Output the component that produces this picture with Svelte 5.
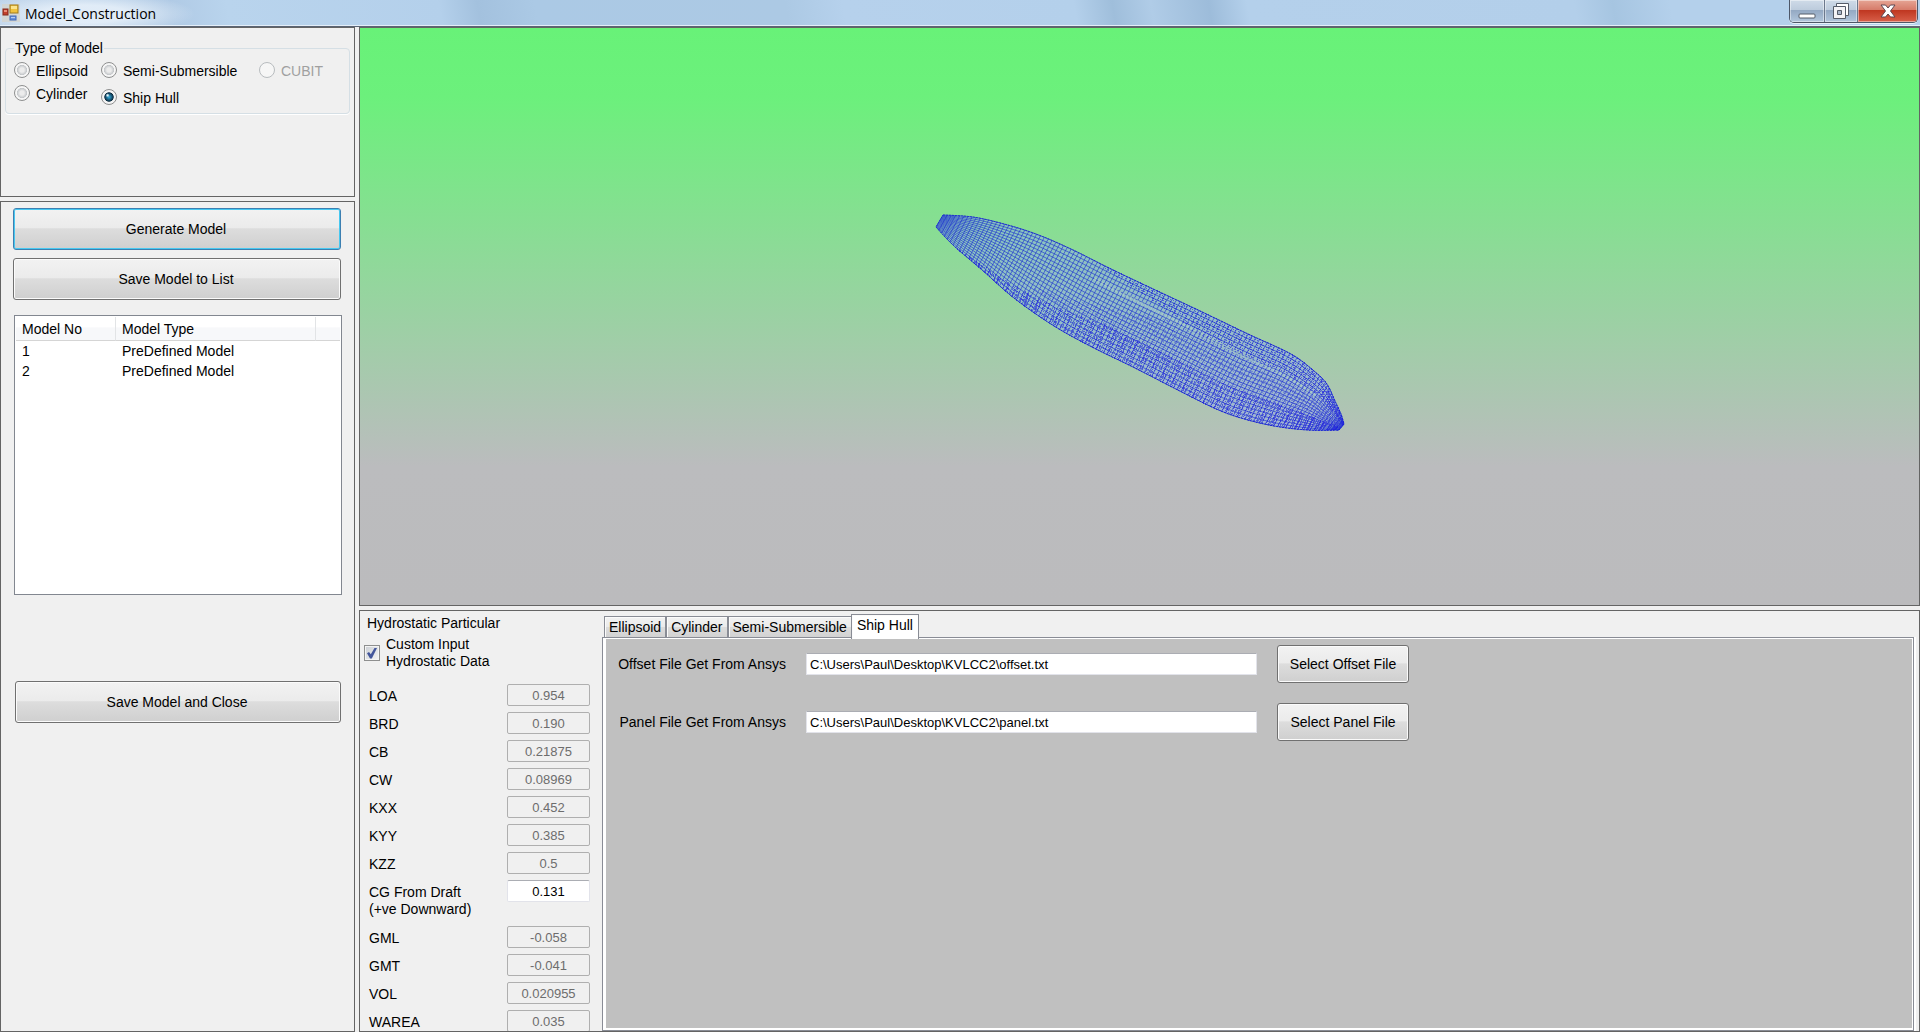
<script lang="ts">
	type Point = [number, number];

	let modelType = $state('ship');
	let activeTab = $state('Ship Hull');
	let customInput = $state(true);
	let offsetFile = $state('C:\\Users\\Paul\\Desktop\\KVLCC2\\offset.txt');
	let panelFile = $state('C:\\Users\\Paul\\Desktop\\KVLCC2\\panel.txt');

	const typeColumns = [
		[
			{ id: 'ellipsoid', label: 'Ellipsoid' },
			{ id: 'cylinder', label: 'Cylinder' }
		],
		[
			{ id: 'semi', label: 'Semi-Submersible' },
			{ id: 'ship', label: 'Ship Hull' }
		],
		[{ id: 'cubit', label: 'CUBIT', disabled: true }]
	];

	const models = [
		{ no: 1, type: 'PreDefined Model' },
		{ no: 2, type: 'PreDefined Model' }
	];

	const particulars = [
		{ name: 'LOA', value: '0.954' },
		{ name: 'BRD', value: '0.190' },
		{ name: 'CB', value: '0.21875' },
		{ name: 'CW', value: '0.08969' },
		{ name: 'KXX', value: '0.452' },
		{ name: 'KYY', value: '0.385' },
		{ name: 'KZZ', value: '0.5' },
		{ name: 'CG From Draft', note: '(+ve Downward)', value: '0.131', editable: true },
		{ name: 'GML', value: '-0.058' },
		{ name: 'GMT', value: '-0.041' },
		{ name: 'VOL', value: '0.020955' },
		{ name: 'WAREA', value: '0.035' }
	];

	const tabs = ['Ellipsoid', 'Cylinder', 'Semi-Submersible', 'Ship Hull'];

	// hull silhouette, bow to stern
	const deck = smooth([
		[9, 2], [39, 4], [70, 11], [102, 21], [137, 36], [177, 56], [217, 75], [264, 97],
		[314, 121], [357, 141], [380, 158], [393, 171], [400, 186], [407, 201], [410, 211]
	]);
	const keel = smooth([
		[2, 14], [20, 33], [47, 56], [80, 85], [120, 113], [160, 135], [197, 153], [240, 175],
		[280, 195], [307, 205], [340, 213], [374, 217], [405, 217]
	]);

	// Catmull-Rom through the control points
	function smooth(line: Point[]): Point[] {
		const out: Point[] = [];
		for (let i = 0; i < line.length - 1; i++) {
			const p0 = line[Math.max(i - 1, 0)];
			const p1 = line[i];
			const p2 = line[i + 1];
			const p3 = line[Math.min(i + 2, line.length - 1)];
			for (let k = 0; k < 6; k++) {
				const t = k / 6;
				const at = (n: 0 | 1) =>
					0.5 *
					(2 * p1[n] +
						(p2[n] - p0[n]) * t +
						(2 * p0[n] - 5 * p1[n] + 4 * p2[n] - p3[n]) * t * t +
						(3 * p1[n] - p0[n] - 3 * p2[n] + p3[n]) * t * t * t);
				out.push([at(0), at(1)]);
			}
		}
		out.push(line[line.length - 1]);
		return out;
	}

	function along(line: Point[], t: number): Point {
		const lengths = line.slice(1).map((p, i) => Math.hypot(p[0] - line[i][0], p[1] - line[i][1]));
		let rest = t * lengths.reduce((a, b) => a + b, 0);
		for (let i = 0; i < lengths.length; i++) {
			if (rest <= lengths[i] || i === lengths.length - 1) {
				const k = rest / lengths[i];
				return [
					line[i][0] + (line[i + 1][0] - line[i][0]) * k,
					line[i][1] + (line[i + 1][1] - line[i][1]) * k
				];
			}
			rest -= lengths[i];
		}
		return line[0];
	}

	function hullPoint(u: number, s: number): Point {
		const a = along(deck, u);
		const b = along(keel, u);
		return [a[0] + (b[0] - a[0]) * s, a[1] + (b[1] - a[1]) * s];
	}

	const fmt = (p: Point) => p[0].toFixed(1) + ' ' + p[1].toFixed(1);

	function waterline(u0: number, u1: number, s0: number, s1 = s0) {
		let d = '';
		for (let i = 0; i <= 50; i++) {
			d += (i ? 'L' : 'M') + fmt(hullPoint(u0 + ((u1 - u0) * i) / 50, s0 + ((s1 - s0) * i) / 50));
		}
		return d;
	}

	function stations(count: number) {
		let d = '';
		for (let i = 0; i <= count; i++) {
			d += `M${fmt(hullPoint(i / count, 0))}L${fmt(hullPoint(i / count, 1))}`;
		}
		return d;
	}

	// the starting station runs from first (at s0) to last (at s1)
	function waterlines(count: number, first: number, last: number, s0: number, s1: number) {
		let d = '';
		for (let j = 0; j <= count; j++) {
			const k = j / count;
			d += waterline(first + (last - first) * k, 1, s0 + (s1 - s0) * k);
		}
		return d;
	}

	const outline = 'M' + [...deck, ...[...keel].reverse()].map(fmt).join('L') + 'Z';
	const grid = stations(112) + waterlines(19, 0, 0, 0, 1);
	const bilge = waterlines(15, 0.42, 0.04, 0.68, 1);
	const side = waterlines(9, 0.34, 0.6, 0, 0.24);
	const bottom = waterlines(16, 0.55, 0.25, 0.26, 0.72);
	const knuckle = waterline(0.36, 0.9, 0.21, 0.3);
</script>

<div class="window">
	<header class="titlebar">
		<svg class="app-icon" width="18" height="18" viewBox="0 0 18 18" aria-hidden="true">
			<rect width="18" height="18" fill="#d5d3c9" opacity="0.7" />
			<rect x="8" y="1" width="8" height="8" fill="#f0c23c" stroke="#a07a1c" />
			<path d="M9 2h6v3H9z" fill="#fbe48c" />
			<rect x="1" y="5" width="5" height="6" fill="#c2402c" stroke="#84281c" />
			<path d="M2 6h3v2H2z" fill="#e88c78" />
			<rect x="8" y="12" width="6" height="4" fill="#6a92dc" stroke="#416ab8" />
			<path d="M9 13h4v1H9z" fill="#b4ccf4" />
		</svg>
		<h1>Model_Construction</h1>
		<div class="window-buttons">
			<button class="minimize" aria-label="Minimize">
				<svg width="18" height="6" viewBox="0 0 18 6">
					<rect x="1" y="1" width="16" height="4" rx="1" fill="#fff" stroke="#555c68" />
				</svg>
			</button>
			<button class="restore" aria-label="Restore">
				<svg width="20" height="18" viewBox="0 0 20 18">
					<path d="M5.500 1.500h12v12h-12z" fill="#fff" stroke="#555c68" />
					<path d="M2.500 4.500h12v12h-12z" fill="#f4f4f6" stroke="#555c68" />
					<path d="M6.500 8.500h4v4h-4z" fill="#a9b6c8" stroke="#555c68" />
				</svg>
			</button>
			<button class="close" aria-label="Close">
				<svg width="16" height="14" viewBox="0 0 16 14">
					<path
						d="M1 1h4.500L8 4l2.500-3H15l-4.500 6 4.500 6h-4.500L8 10l-2.500 3H1l4.500-6z"
						fill="#fff"
						stroke="#5d4650"
						stroke-linejoin="round"
					/>
				</svg>
			</button>
		</div>
	</header>

	<main>
		<div class="sidebar">
			<section class="panel">
				<fieldset>
					<legend>Type of Model</legend>
					<div class="types">
						{#each typeColumns as column}
							<div class="type-column">
								{#each column as item}
									<label class:disabled={item.disabled}>
										<input
											type="radio"
											name="type"
											value={item.id}
											bind:group={modelType}
											disabled={item.disabled}
										/>
										<span>{item.label}</span>
									</label>
								{/each}
							</div>
						{/each}
					</div>
				</fieldset>
			</section>

			<section class="panel actions">
				<button class="btn wide focused">Generate Model</button>
				<button class="btn wide">Save Model to List</button>
				<div class="list">
					<table>
						<thead>
							<tr><th class="no">Model No</th><th class="kind">Model Type</th><td></td></tr>
						</thead>
						<tbody>
							{#each models as model}
								<tr><td>{model.no}</td><td>{model.type}</td><td></td></tr>
							{/each}
						</tbody>
					</table>
				</div>
				<button class="btn wide save-close">Save Model and Close</button>
			</section>
		</div>

		<div class="content">
			<section class="panel viewport">
				<svg width="412" height="220" viewBox="0 0 412 220" role="img" aria-label="Hull mesh">
					<path d={outline} class="skin" />
					<path d={grid} class="wire" />
					<path d={bottom} class="wire dense faint" />
					<path d={bilge} class="wire dense" />
					<path d={side} class="wire dense" />
					<path d={knuckle} class="knuckle" />
				</svg>
			</section>

			<section class="panel details">
				<div class="hydro">
					<h2>Hydrostatic Particular</h2>
					<label class="custom">
						<input type="checkbox" bind:checked={customInput} />
						<span>Custom Input<br />Hydrostatic Data</span>
					</label>
					<div class="particulars">
						{#each particulars as item, i}
							<div class="particular" class:tall={item.note}>
								<label for="particular-{i}">
									{item.name}
									{#if item.note}<br />{item.note}{/if}
								</label>
								<input id="particular-{i}" type="text" value={item.value} disabled={!item.editable} />
							</div>
						{/each}
					</div>
				</div>

				<div class="tabs">
					<div class="tab-strip" role="tablist">
						{#each tabs as tab}
							<button
								role="tab"
								class="tab"
								class:active={activeTab === tab}
								aria-selected={activeTab === tab}
								onclick={() => (activeTab = tab)}
							>
								{tab}
							</button>
						{/each}
					</div>
					<div class="tab-page" role="tabpanel">
						{#if activeTab === 'Ship Hull'}
							<div class="files">
								<label for="offset-file">Offset File Get From Ansys</label>
								<input id="offset-file" type="text" bind:value={offsetFile} />
								<button class="btn">Select Offset File</button>
								<label for="panel-file">Panel File Get From Ansys</label>
								<input id="panel-file" type="text" bind:value={panelFile} />
								<button class="btn">Select Panel File</button>
							</div>
						{/if}
					</div>
				</div>
			</section>
		</div>
	</main>
</div>

<style>
	:global(body) {
		margin: 0;
		background: #f0f0f0;
	}

	.window {
		height: 100vh;
		display: flex;
		flex-direction: column;
		overflow: hidden;
		font: 14px/17px 'Liberation Sans', Arial, sans-serif;
		color: #000;
	}

	.window * {
		box-sizing: border-box;
	}

	button,
	input {
		font: inherit;
		color: inherit;
		margin: 0;
	}

	/* title bar */

	.titlebar {
		height: 27px;
		flex: none;
		display: flex;
		align-items: center;
		gap: 5px;
		padding: 0 2px;
		border-bottom: 1px solid #5a6474;
		box-shadow: inset 0 -1px #e4eef8;
		background:
			radial-gradient(ellipse 110px 22px at 85px 14px, rgba(235, 243, 251, 0.8) 40%, transparent),
			linear-gradient(
				80deg,
				#bdd3ea 0%,
				#b0cae5 9%,
				#b9d4ed 12%,
				#b4d0eb 23%,
				#a3c1de 25%,
				#abc9e5 28%,
				#acc9e4 41%,
				#b6d1ec 44%,
				#b4d0eb 56%,
				#9fbedb 58%,
				#b0cce7 60%,
				#9dbcda 63%,
				#b4d0eb 65%,
				#b3cfea 82%,
				#a6c5e1 84%,
				#b4d0eb 87%,
				#b4d0eb 100%
			);
	}

	.app-icon {
		flex: none;
	}

	h1 {
		margin: 0;
		padding-top: 2px;
		flex: 1;
		font: 14px/20px 'Open Sans', 'Noto Sans', sans-serif;
	}

	.window-buttons {
		align-self: flex-start;
		display: flex;
		height: 23px;
		border: 1px solid #4d5768;
		border-top: 0;
		border-radius: 0 0 5px 5px;
		overflow: hidden;
		box-shadow: 0 1px rgba(255, 255, 255, 0.7);
	}

	.window-buttons button {
		display: flex;
		align-items: center;
		justify-content: center;
		border: 0;
		padding: 0;
		box-shadow: inset 0 0 0 1px rgba(255, 255, 255, 0.45);
		background: linear-gradient(#cfdbe8 0, #bccbdc 45%, #93a8c2 46%, #b2c6dc 100%);
	}

	.window-buttons .minimize {
		width: 34px;
		padding-top: 9px;
	}

	.window-buttons .restore {
		width: 34px;
		border-left: 1px solid #6b788c;
		border-right: 1px solid #6b788c;
	}

	.window-buttons .close {
		width: 59px;
		background: linear-gradient(#e5a595 0, #d67b69 45%, #bf3620 46%, #d8604a 100%);
	}

	/* panels */

	main {
		flex: 1;
		min-height: 0;
		display: grid;
		grid-template-columns: 355px minmax(0, 1fr);
		gap: 4px;
	}

	.sidebar,
	.content {
		display: grid;
		gap: 4px;
		min-height: 0;
	}

	.sidebar {
		grid-template-rows: 170px minmax(0, 1fr);
	}

	.content {
		grid-template-rows: minmax(0, 1fr) 422px;
	}

	.panel {
		border: 1px solid #646464;
		background: #f0f0f0;
		overflow: hidden;
	}

	fieldset {
		margin: 12px 4px 0;
		padding: 4px 8px 6px;
		border: 1px solid #d5dfe5;
		border-radius: 4px;
		box-shadow: 0 1px #fff;
	}

	legend {
		padding: 0 1px;
		line-height: 16px;
	}

	.types {
		display: grid;
		grid-template-columns: 87px 158px auto;
	}

	.type-column {
		display: flex;
		flex-direction: column;
		gap: 3px;
	}

	.type-column:nth-child(2) {
		gap: 7px;
	}

	.type-column label {
		display: flex;
		align-items: center;
		gap: 6px;
		height: 20px;
		white-space: nowrap;
	}

	.type-column span {
		padding-top: 2px;
	}

	.disabled {
		color: #a0a0a0;
	}

	input[type='radio'] {
		appearance: none;
		width: 16px;
		height: 16px;
		border: 1px solid #8e8f8f;
		border-radius: 50%;
		background: radial-gradient(circle 7px at 50% 50%, #ececec 30%, #c4c7ca 68%, #f6f6f6 76%);
	}

	input[type='radio']:checked {
		background:
			radial-gradient(circle 2px at 40% 38%, #e4f8ff 20%, transparent),
			radial-gradient(circle 7px at 50% 50%, #2f9cc8 10%, #15506f 45%, #0d2c40 62%, #f4f4f4 72%);
	}

	input[type='radio']:disabled {
		border-color: #b8bcbf;
		background: #f6f6f6;
	}

	.btn {
		height: 38px;
		padding: 0 10px;
		border: 1px solid #707070;
		border-radius: 3px;
		box-shadow: inset 0 0 0 1px #fbfbfb;
		background: linear-gradient(#f2f2f2 0, #ebebeb 48%, #dddddd 49%, #cfcfcf 100%);
	}

	.btn.wide {
		height: 42px;
		padding: 0 12px 0 10px;
	}

	.btn.focused {
		border-color: #3c7fb1;
		box-shadow: inset 0 0 0 1px #48c8f0;
	}

	.actions {
		display: flex;
		flex-direction: column;
		gap: 8px;
		padding: 6px 13px 0 12px;
	}

	.actions .btn {
		flex: none;
	}

	.list {
		height: 280px;
		flex: none;
		margin-top: 7px;
		margin-left: 1px;
		margin-right: -1px;
		padding: 1px;
		border: 1px solid #828790;
		background: #fff;
	}

	.save-close {
		margin-top: 78px;
		margin-left: 2px;
	}

	table {
		width: 100%;
		table-layout: fixed;
		border-collapse: separate;
		border-spacing: 0;
	}

	th,
	td {
		height: 20px;
		padding: 1px 6px;
		text-align: left;
		font-weight: normal;
	}

	thead th,
	thead td {
		height: 24px;
		padding-top: 2px;
		border-bottom: 1px solid #d5d5d5;
		background: linear-gradient(#fff 45%, #f7f8fa 46%, #f7f8fa);
	}

	thead th {
		border-right: 1px solid #e2e4e6;
	}

	.no {
		width: 100px;
	}

	.kind {
		width: 200px;
	}

	/* 3d view */

	.viewport {
		display: flex;
		align-items: center;
		justify-content: center;
		padding-top: 12px;
		background: linear-gradient(#68f278 0, #6cf07c 12%, #bbbcbe 76%, #bbbbbd 100%);
	}

	.skin {
		fill: #8ea6f4;
		fill-opacity: 0.45;
		stroke: #2a38c8;
		stroke-dasharray: 2 1;
	}

	.wire {
		fill: none;
		stroke: #1a30d0;
		stroke-width: 0.8;
		stroke-opacity: 0.8;
	}

	.dense {
		stroke: #1c18e0;
		stroke-width: 1;
		stroke-dasharray: 1 2 2 1 1 3 1 1;
		stroke-opacity: 0.55;
		shape-rendering: crispEdges;
	}

	.faint {
		stroke-opacity: 0.3;
	}

	.knuckle {
		fill: none;
		stroke: #acd0c8;
		stroke-width: 3;
		stroke-dasharray: 2 2;
		stroke-opacity: 0.7;
	}

	/* hydrostatics */

	.details {
		display: grid;
		grid-template-columns: 242px minmax(0, 1fr);
	}

	.hydro {
		padding: 4px 12px 0 4px;
	}

	h2 {
		margin: 0 0 0 3px;
		font-size: 14px;
		line-height: 17px;
		font-weight: normal;
	}

	.custom {
		display: flex;
		align-items: center;
		gap: 6px;
		margin-top: 4px;
	}

	input[type='checkbox'] {
		appearance: none;
		width: 16px;
		height: 16px;
		display: grid;
		place-content: center;
		border: 1px solid #8e8f8f;
		box-shadow: inset 0 0 0 1px #f4f4f4;
		background: linear-gradient(135deg, #cbcfd5, #f4f4f4);
	}

	input[type='checkbox']:checked::before {
		content: '';
		width: 10px;
		height: 11px;
		background: #43569b;
		clip-path: polygon(0 52%, 20% 42%, 38% 62%, 78% 0, 100% 4%, 48% 100%, 30% 100%);
	}

	.particulars {
		display: flex;
		flex-direction: column;
		gap: 6px;
		margin-top: 14px;
	}

	.particular {
		display: flex;
		align-items: flex-start;
		justify-content: space-between;
		height: 22px;
		padding-left: 5px;
	}

	.particular.tall {
		height: 40px;
	}

	.particular label {
		padding-top: 4px;
	}

	input[type='text'] {
		height: 22px;
		padding: 0 3px;
		border: 1px solid #e2e3ea;
		border-top-color: #abadb3;
		background: #fff;
		font-size: 13px;
	}

	.particular input {
		width: 83px;
		border-radius: 2px;
		text-align: center;
	}

	.particular input:disabled {
		border-color: #afafaf;
		background: #f0f0f0;
		color: #6d6d6d;
	}

	/* tabs */

	.tabs {
		display: flex;
		flex-direction: column;
		padding: 3px 5px 1px 0;
	}

	.tab-strip {
		display: flex;
		align-items: flex-end;
		height: 23px;
		padding-left: 2px;
	}

	.tab {
		height: 21px;
		padding: 0 4px;
		border: 1px solid #898c95;
		border-bottom: 0;
		background: linear-gradient(#f2f2f2 0, #ebebeb 48%, #dddddd 49%, #d2d2d2 100%);
		box-shadow: inset 1px 1px #fbfbfb;
	}

	.tab.active {
		position: relative;
		height: 25px;
		margin: 0 0 -2px -1px;
		padding: 0 5px 3px;
		background: #fff;
	}

	.tab-page {
		flex: 1;
		border: 1px solid #898c95;
		box-shadow:
			inset 3px 1px #fff,
			inset -1px -2px #fff,
			2px 0 #fff;
		padding: 7px 13px;
		background: #c0c0c0;
	}

	.files {
		display: grid;
		grid-template-columns: 170px 451px 132px;
		gap: 20px;
		align-items: center;
	}

	.files label {
		text-align: right;
		white-space: nowrap;
	}
</style>
